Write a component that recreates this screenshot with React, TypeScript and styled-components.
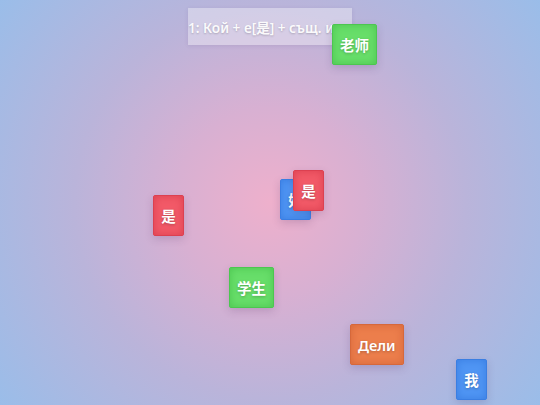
import React from 'react';
import styled, { createGlobalStyle } from 'styled-components';

type Tone = 'red' | 'green' | 'blue' | 'orange';

interface Piece {
  id: number;
  label: string;
  tone: Tone;
  x: number;
  y: number;
}

const tones: Record<Tone, { bg: string; edge: string }> = {
  red: { bg: '#f25a68', edge: '#dc4050' },
  green: { bg: '#68de6a', edge: '#4cc650' },
  blue: { bg: '#5096f4', edge: '#3a7ee2' },
  orange: { bg: '#ec7e4c', edge: '#d6683a' },
};

const pieces: Piece[] = [
  { id: 1, label: '老师', tone: 'green', x: 332, y: 24 },
  { id: 2, label: '是', tone: 'red', x: 153, y: 195 },
  { id: 3, label: '好', tone: 'blue', x: 280, y: 179 },
  { id: 4, label: '是', tone: 'red', x: 293, y: 170 },
  { id: 5, label: '学生', tone: 'green', x: 229, y: 267 },
  { id: 6, label: 'Дели', tone: 'orange', x: 350, y: 324 },
  { id: 7, label: '我', tone: 'blue', x: 456, y: 359 },
];

const GlobalStyle = createGlobalStyle`
  html, body {
    margin: 0;
    padding: 0;
  }

  body {
    font-family: "Noto Sans", "Noto Sans CJK SC", sans-serif;
  }
`;

const Stage = styled.div`
  position: relative;
  width: 540px;
  height: 405px;
  overflow: hidden;
  display: flex;
  flex-direction: column;
  align-items: center;
  padding-top: 8px;
  box-sizing: border-box;
  background: radial-gradient(circle at 50% 50%, #eeb0cc 0%, #d8b0d2 28%, #bab4da 58%, #9abde9 100%);
`;

const Prompt = styled.div`
  width: 164px;
  height: 37px;
  display: flex;
  align-items: center;
  overflow: hidden;
  white-space: nowrap;
  background: rgba(255, 255, 255, 0.35);
  box-shadow: 0 1px 4px rgba(80, 60, 120, 0.12);
  color: rgba(255, 255, 255, 0.95);
  font-size: 13.6px;
  font-weight: 600;
  text-shadow: 0 1px 2px rgba(0, 0, 0, 0.2);
`;

const Tile = styled.div<{ $tone: Tone }>`
  position: absolute;
  height: 41px;
  min-width: 31px;
  padding: 0 7px;
  box-sizing: border-box;
  display: flex;
  align-items: center;
  justify-content: center;
  border-radius: 2px;
  border: 1px solid ${({ $tone }) => tones[$tone].edge};
  background: ${({ $tone }) => tones[$tone].bg};
  box-shadow:
    inset 0 0 9px ${({ $tone }) => tones[$tone].edge},
    0 3px 8px rgba(60, 40, 90, 0.18);
  color: #fff;
  font-family: "Noto Sans", "Noto Sans CJK SC", sans-serif;
  font-size: 14.5px;
  font-weight: 600;
  text-shadow: 0 1px 3px rgba(0, 0, 0, 0.25);
`;

export default function App() {
  return (
    <>
      <GlobalStyle />
      <Stage>
        <Prompt>1: Кой + е[是] + същ. име?</Prompt>
        {pieces.map((p) => (
          <Tile key={p.id} $tone={p.tone} style={{ left: p.x, top: p.y }}>
            {p.label}
          </Tile>
        ))}
      </Stage>
    </>
  );
}
